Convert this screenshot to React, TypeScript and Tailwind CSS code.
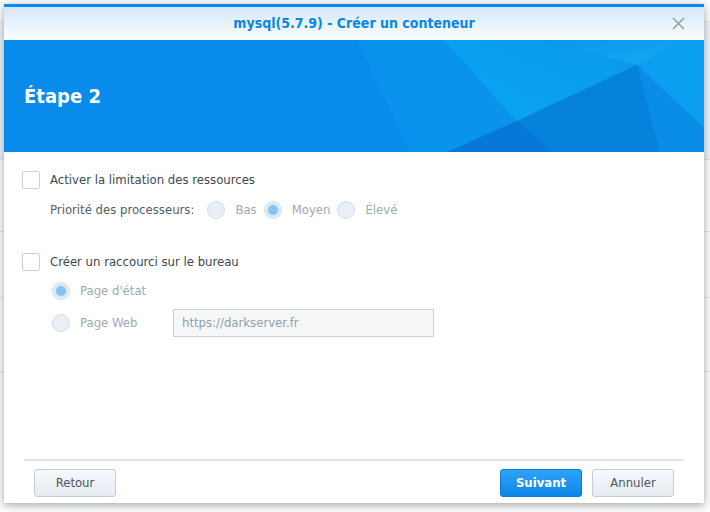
import type { ReactNode } from 'react'

const font = "font-['DejaVu_Sans_Condensed',sans-serif]"

function Banner() {
  return (
    <div className="relative h-[112px] bg-[#098bec] overflow-hidden">
      <svg className="absolute inset-0" width="700" height="112" viewBox="0 0 700 112">
        <defs>
          <linearGradient id="glow" x1="0" y1="1" x2="1" y2="0">
            <stop offset="0" stopColor="#0bb6f3" />
            <stop offset="1" stopColor="#0a9bee" />
          </linearGradient>
          <linearGradient id="top" x1="0" y1="0" x2="1" y2="1">
            <stop offset="0" stopColor="#0995ee" />
            <stop offset="1" stopColor="#18aaf1" />
          </linearGradient>
        </defs>
        <polygon points="353,0 536,0 633,25 513,81 443,112 406,112" fill="#0993ed" />
        <polygon points="440,0 536,0 633,25 513,81" fill="url(#glow)" opacity="0.55" />
        <polygon points="536,0 683,0 633,25" fill="url(#top)" />
        <polygon points="683,0 700,0 700,88 633,25" fill="#0a9ff0" />
        <polygon points="633,25 513,81 549,112 656,112" fill="#0782dc" />
        <polygon points="513,81 443,112 549,112" fill="#0679d8" />
        <polygon points="633,25 656,112 700,112 700,88" fill="#0a8de6" />
      </svg>
      <div className={`relative h-full flex items-center pl-5 text-white text-[20px] font-bold ${font}`}>
        Étape 2
      </div>
    </div>
  )
}

function Checkbox({ label }: { label: string }) {
  return (
    <div className="flex items-center gap-[10px] leading-[18px]">
      <span className="w-[18px] h-[18px] border border-[#c6d1db] bg-white rounded-[2px]" />
      <span className="text-[13px] text-[#3e4852]">{label}</span>
    </div>
  )
}

function Radio({ checked, children }: { checked?: boolean; children: ReactNode }) {
  return (
    <div className="flex items-center gap-[10px] leading-[18px]">
      <span className="w-[18px] h-[18px] rounded-full border border-[#d4dee7] bg-[#e9eff4] flex items-center justify-center">
        {checked && <span className="w-[10px] h-[10px] rounded-full bg-[#86c5f2] ring-2 ring-[#d3e8f8]" />}
      </span>
      <span className="text-[13px] text-[#9ea9b4]">{children}</span>
    </div>
  )
}

function Button({ primary, children }: { primary?: boolean; children: ReactNode }) {
  return (
    <button
      className={
        primary
          ? 'w-[82px] h-[28px] rounded-[3px] border border-[#0a7bd9] bg-gradient-to-b from-[#2ea3f6] to-[#0b86e9] text-white text-[13px] font-bold'
          : 'w-[82px] h-[28px] rounded-[3px] border border-[#c3cdd7] bg-gradient-to-b from-[#f7f9fb] to-[#e6ecf2] text-[#4d5761] text-[13px]'
      }
    >
      {children}
    </button>
  )
}

export default function App() {
  return (
    <div className={`relative w-[710px] h-[512px] bg-[#fbfcfd] overflow-hidden ${font}`}>
      {/* page behind the dialog */}
      <div className="flex flex-col">
        <div className="h-[22px] border-b border-[#e3e8ec]" />
        <div className="h-[138px] bg-[#edf3f9] border-b border-[#dde4ea]" />
        <div className="h-[72px] border-b border-[#dfe4e9]" />
        <div className="h-[66px] border-b border-[#dfe4e9]" />
        <div className="h-[74px] border-b border-[#dfe4e9]" />
      </div>

      {/* dialog */}
      <div className="absolute left-[4px] top-[4px] w-[700px] h-[499px] bg-white border-t-[3px] border-[#0a8aec] shadow-[0_2px_8px_rgba(0,0,0,0.35)] flex flex-col">
        <div className="h-[33px] bg-gradient-to-b from-[#d4e8f9] to-[#fbfdff] flex items-center justify-center relative">
          <span className="text-[14px] font-bold text-[#0a86e2]">mysql(5.7.9) - Créer un conteneur</span>
          <svg className="absolute right-[19px] top-[10px]" width="13" height="13" viewBox="0 0 13 13">
            <path d="M1 1 L12 12 M12 1 L1 12" stroke="#9aa1a8" strokeWidth="1.6" />
          </svg>
        </div>
        <Banner />

        <div className="flex-1 flex flex-col pl-[18px] pt-[19px]">
          <Checkbox label="Activer la limitation des ressources" />
          <div className="flex items-center mt-[12px] pl-[28px] leading-[18px]">
            <span className="text-[13px] text-[#545e68] mr-[13px]">Priorité des processeurs:</span>
            <div className="flex items-center gap-[7px]">
              <Radio>Bas</Radio>
              <Radio checked>Moyen</Radio>
              <Radio>Élevé</Radio>
            </div>
          </div>

          <div className="mt-[34px]">
            <Checkbox label="Créer un raccourci sur le bureau" />
          </div>
          <div className="pl-[30px] mt-[11px] flex flex-col">
            <Radio checked>Page d'état</Radio>
            <div className="flex items-center mt-[9px]">
              <div className="w-[121px]">
                <Radio>Page Web</Radio>
              </div>
              <div className="w-[261px] h-[28px] border border-[#c9d2da] bg-[#f5f7f9] flex items-center px-2 text-[13px] text-[#939ea9]">
                https://darkserver.fr
              </div>
            </div>
          </div>
        </div>

        <div className="mx-[20px] border-t-2 border-[#e1e5e9]" />
        <div className="flex items-center justify-between px-[30px] pt-[8px] pb-[6px]">
          <Button>Retour</Button>
          <div className="flex gap-[10px]">
            <Button primary>Suivant</Button>
            <Button>Annuler</Button>
          </div>
        </div>
      </div>
    </div>
  )
}
